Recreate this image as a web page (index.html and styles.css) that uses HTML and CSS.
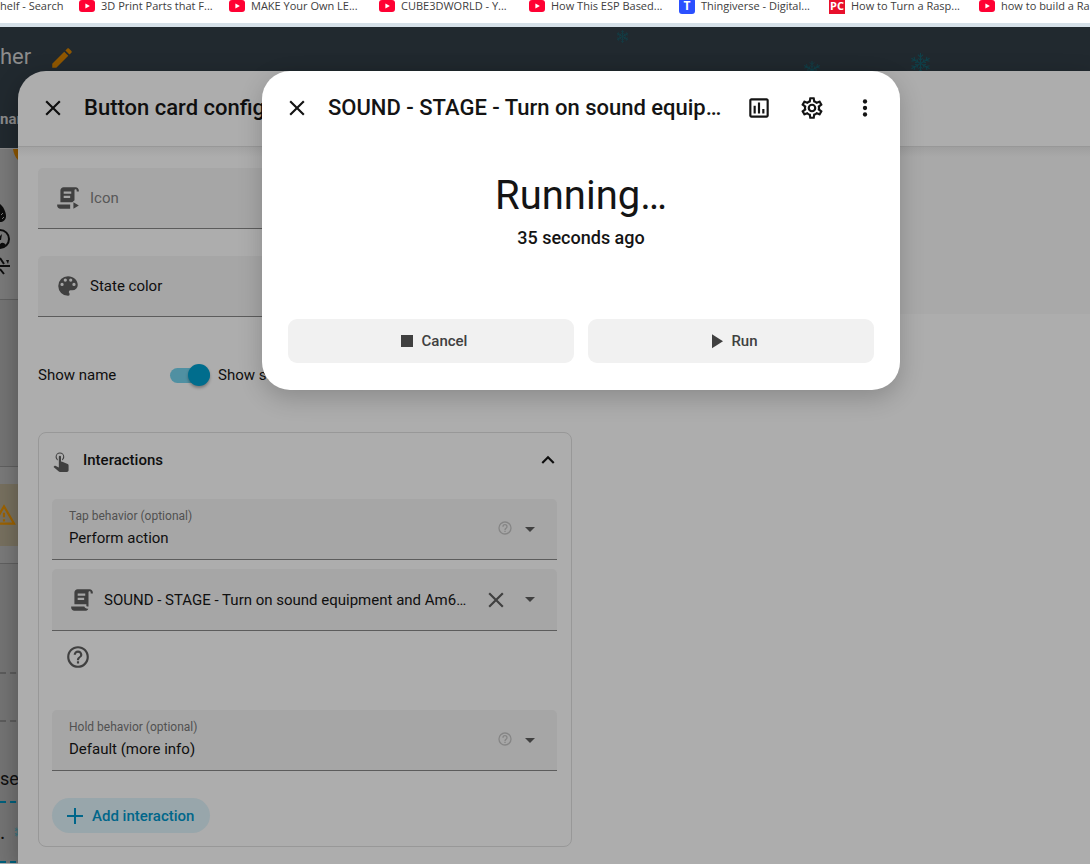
FILE: index.html
```html
<!DOCTYPE html>
<html lang="en">
  <head>
    <meta charset="UTF-8" />
    <meta name="viewport" content="width=device-width, initial-scale=1.0" />
    <title>Button card configuration</title>
    <link rel="stylesheet" href="styles.css">
  </head>
  <body>
    <!-- shared icons -->
    <svg class="sprite" aria-hidden="true">
      <symbol id="close" viewBox="0 0 24 24"><path d="M19,6.41L17.59,5L12,10.59L6.41,5L5,6.41L10.59,12L5,17.59L6.41,19L12,13.41L17.59,19L19,17.59L13.41,12L19,6.41Z" /></symbol>
      <symbol id="help" viewBox="0 0 24 24"><path d="M11,18H13V16H11V18M12,2A10,10 0 0,0 2,12A10,10 0 0,0 12,22A10,10 0 0,0 22,12A10,10 0 0,0 12,2M12,20C7.59,20 4,16.41 4,12C4,7.59 7.59,4 12,4C16.41,4 20,7.59 20,12C20,16.41 16.41,20 12,20M12,6A4,4 0 0,0 8,10H10A2,2 0 0,1 12,8A2,2 0 0,1 14,10C14,12 11,11.75 11,15H13C13,12.75 16,12.5 16,10A4,4 0 0,0 12,6Z" /></symbol>
      <symbol id="caret" viewBox="0 0 10 5"><path d="M0,0H10L5,5Z" /></symbol>
      <symbol id="youtube" viewBox="0 0 16 16"><rect y="2" width="16" height="12" rx="3" fill="#ff0033" /><path d="M6.4,5.4V10.6L10.9,8Z" fill="#fff" /></symbol>
      <symbol id="snow" viewBox="0 0 20 20">
        <g fill="none" stroke="currentColor" stroke-width="1">
          <path id="arm" d="M10,10V0M7.5,1.5L10,4L12.5,1.5M8,5L10,7L12,5" />
          <use href="#arm" transform="rotate(60 10 10)" />
          <use href="#arm" transform="rotate(120 10 10)" />
          <use href="#arm" transform="rotate(180 10 10)" />
          <use href="#arm" transform="rotate(240 10 10)" />
          <use href="#arm" transform="rotate(300 10 10)" />
        </g>
      </symbol>
    </svg>

    <nav class="bookmarks">
      <a class="bookmark bookmark-first" href="#">helf - Search</a>
      <a class="bookmark" href="#"><svg><use href="#youtube" /></svg>3D Print Parts that F...</a>
      <a class="bookmark" href="#"><svg><use href="#youtube" /></svg>MAKE Your Own LE...</a>
      <a class="bookmark" href="#"><svg><use href="#youtube" /></svg>CUBE3DWORLD - Y...</a>
      <a class="bookmark" href="#"><svg><use href="#youtube" /></svg>How This ESP Based...</a>
      <a class="bookmark" href="#"><span class="favicon favicon-t">T</span>Thingiverse - Digital...</a>
      <a class="bookmark" href="#"><span class="favicon favicon-pc">PC</span>How to Turn a Rasp...</a>
      <a class="bookmark" href="#"><svg><use href="#youtube" /></svg>how to build a Ra...</a>
    </nav>

    <div class="app">
      <header class="app-header">
        <div class="app-title">
          <span>her</span>
          <svg class="icon pencil" viewBox="0 0 24 24"><path d="M20.71,7.04C21.1,6.65 21.1,6 20.71,5.63L18.37,3.29C18,2.9 17.35,2.9 16.96,3.29L15.12,5.12L18.87,8.87M3,17.25V21H6.75L17.81,9.93L14.06,6.18L3,17.25Z" /></svg>
        </div>
        <div class="app-tab">nar</div>
        <svg class="snow snow-a"><use href="#snow" /></svg>
        <svg class="snow snow-b"><use href="#snow" /></svg>
        <svg class="snow snow-c"><use href="#snow" /></svg>
      </header>

      <main class="dashboard">
        <div class="tile tile-icons">
          <svg class="marker" viewBox="0 0 5 11"><path d="M0,0H5V11Q1,7 0,0Z" /></svg>
          <svg class="glyphs" viewBox="0 0 11 74">
            <path d="M0,2C3,4 6,10 6,14C6,18 3,20 0,20Z" />
            <g fill="none" stroke="#0d0d0d" stroke-width="2">
              <circle cx="0" cy="37" r="9" />
              <path d="M0,56L4,62M0,64H10M0,67L4,72" />
            </g>
            <path d="M0,42Q3,39 6,43L2,46H0ZM0,34L2,32L1,38H0ZM6,58H9L8,62Z" />
            <path d="M1,13L3,11M2,17L4,15" stroke="#777" stroke-width="1" />
          </svg>
        </div>
        <div class="tile tile-gap"></div>
        <div class="tile tile-warning">
          <div class="warning">
            <svg class="icon" viewBox="0 0 24 24"><path d="M12,2L1,21H23M12,6L19.53,19H4.47M11,10V14H13V10M11,16V18H13V16" /></svg>
          </div>
        </div>
        <div class="drop drop-one"></div>
        <div class="drop drop-two"></div>
        <div class="section-name">se</div>
        <div class="section-card">. <svg><use href="#snow" /></svg></div>
      </main>

      <section class="editor" role="dialog" aria-labelledby="editor-title">
        <header class="editor-header">
          <button class="icon-button" aria-label="Close editor"><svg class="icon"><use href="#close" /></svg></button>
          <h2 class="dialog-title" id="editor-title">Button card configuration</h2>
        </header>

        <div class="editor-body">
          <form class="editor-form">
            <div class="field">
              <svg class="icon" viewBox="0 0 24 24"><path d="M5,5C5,3.3 6.3,2 8,2H19C20.7,2 22,3.3 22,5V6H20V5C20,4.4 19.6,4 19,4C18.4,4 18,4.4 18,5V14L16,16H5V5M8,6V8H15V6H8M8,10V12H14V10H8M2,18H14V22H5C3.3,22 2,20.7 2,19V18M17,16V22L22,19L17,16Z" /></svg>
              <input class="field-value" type="text" placeholder="Icon" aria-label="Icon" />
            </div>
            <div class="field">
              <svg class="icon" viewBox="0 0 24 24"><path d="M17.5,12A1.5,1.5 0 0,1 16,10.5A1.5,1.5 0 0,1 17.5,9A1.5,1.5 0 0,1 19,10.5A1.5,1.5 0 0,1 17.5,12M14.5,8A1.5,1.5 0 0,1 13,6.5A1.5,1.5 0 0,1 14.5,5A1.5,1.5 0 0,1 16,6.5A1.5,1.5 0 0,1 14.5,8M9.5,8A1.5,1.5 0 0,1 8,6.5A1.5,1.5 0 0,1 9.5,5A1.5,1.5 0 0,1 11,6.5A1.5,1.5 0 0,1 9.5,8M6.5,12A1.5,1.5 0 0,1 5,10.5A1.5,1.5 0 0,1 6.5,9A1.5,1.5 0 0,1 8,10.5A1.5,1.5 0 0,1 6.5,12M12,3A9,9 0 0,0 3,12A9,9 0 0,0 12,21A1.5,1.5 0 0,0 13.5,19.5C13.5,19.11 13.35,18.76 13.11,18.5C12.88,18.23 12.73,17.88 12.73,17.5A1.5,1.5 0 0,1 14.23,16H16A5,5 0 0,0 21,11C21,6.58 16.97,3 12,3Z" /></svg>
              <select class="field-value" aria-label="State color">
                <option>State color</option>
              </select>
            </div>

            <div class="switches">
              <div class="switch-row">
                <label for="show-name">Show name</label>
                <input class="switch" type="checkbox" id="show-name" checked />
              </div>
              <div class="switch-row">
                <label for="show-state">Show state</label>
                <input class="switch" type="checkbox" id="show-state" />
              </div>
            </div>

            <section class="panel">
              <header class="panel-header">
                <svg class="icon" viewBox="0 0 24 24"><path d="M10,9A1,1 0 0,1 11,8A1,1 0 0,1 12,9V13.47L13.21,13.6L18.15,15.79C18.68,16.03 19,16.56 19,17.14V21.5C18.97,22.32 18.32,22.97 17.5,23H11C10.62,23 10.26,22.85 10,22.57L5.1,18.37L5.84,17.6C6.03,17.39 6.3,17.28 6.58,17.28H6.8L10,19V9M11,5A4,4 0 0,1 15,9C15,10.5 14.2,11.77 13,12.46V11.24C13.61,10.69 14,9.89 14,9A3,3 0 0,0 11,6A3,3 0 0,0 8,9C8,9.89 8.39,10.69 9,11.24V12.46C7.8,11.77 7,10.5 7,9A4,4 0 0,1 11,5Z" /></svg>
                <h3>Interactions</h3>
                <button class="icon-button" type="button" aria-label="Collapse">
                  <svg class="icon" viewBox="0 0 24 24"><path d="M7.41,15.41L12,10.83L16.59,15.41L18,14L12,8L6,14L7.41,15.41Z" /></svg>
                </button>
              </header>

              <div class="field">
                <div class="field-text">
                  <label for="tap">Tap behavior (optional)</label>
                  <select class="field-value" id="tap">
                    <option>Perform action</option>
                  </select>
                </div>
                <svg class="hint"><use href="#help" /></svg>
                <svg class="caret"><use href="#caret" /></svg>
              </div>

              <div class="field field-action">
                <svg class="icon" viewBox="0 0 24 24"><path d="M17.8,20C17.4,21.2 16.3,22 15,22H5C3.3,22 2,20.7 2,19V18H5L14.2,18C14.6,19.2 15.7,20 17,20H17.8M19,2C20.7,2 22,3.3 22,5V6H20V5C20,4.4 19.6,4 19,4C18.4,4 18,4.4 18,5V18H17C16.4,18 16,17.6 16,17V16H5V5C5,3.3 6.3,2 8,2H19M8,6V8H15V6H8M8,10V12H14V10H8Z" /></svg>
                <input class="field-value" type="text" aria-label="Action" value="SOUND - STAGE - Turn on sound equipment and Am6…" />
                <button class="icon-button" type="button" aria-label="Clear"><svg class="icon"><use href="#close" /></svg></button>
                <svg class="caret"><use href="#caret" /></svg>
              </div>

              <button class="icon-button help-button" type="button" aria-label="Help"><svg class="icon"><use href="#help" /></svg></button>

              <div class="field">
                <div class="field-text">
                  <label for="hold">Hold behavior (optional)</label>
                  <select class="field-value" id="hold">
                    <option>Default (more info)</option>
                  </select>
                </div>
                <svg class="hint"><use href="#help" /></svg>
                <svg class="caret"><use href="#caret" /></svg>
              </div>

              <button class="add-button" type="button">
                <svg viewBox="0 0 16 16"><path d="M7,0H9V7H16V9H9V16H7V9H0V7H7Z" /></svg>
                Add interaction
              </button>
            </section>
          </form>
          <div class="preview"></div>
        </div>
      </section>

      <section class="more-info" role="dialog" aria-labelledby="info-title">
        <header class="more-info-header">
          <button class="icon-button" aria-label="Close"><svg class="icon"><use href="#close" /></svg></button>
          <h2 class="dialog-title" id="info-title">SOUND - STAGE - Turn on sound equip…</h2>
          <div class="more-info-actions">
            <button class="icon-button" aria-label="History">
              <svg class="icon" viewBox="0 0 24 24"><path d="M9 17H7V10H9V17M13 17H11V7H13V17M17 17H15V13H17V17M19 19H5V5H19V19.1M19 3H5C3.9 3 3 3.9 3 5V19C3 20.1 3.9 21 5 21H19C20.1 21 21 20.1 21 19V5C21 3.9 20.1 3 19 3Z" /></svg>
            </button>
            <button class="icon-button" aria-label="Settings">
              <svg class="icon" viewBox="0 0 24 24"><path d="M12,8A4,4 0 0,1 16,12A4,4 0 0,1 12,16A4,4 0 0,1 8,12A4,4 0 0,1 12,8M12,10A2,2 0 0,0 10,12A2,2 0 0,0 12,14A2,2 0 0,0 14,12A2,2 0 0,0 12,10M10,22C9.75,22 9.54,21.82 9.5,21.58L9.13,18.93C8.5,18.68 7.96,18.34 7.44,17.94L4.95,18.95C4.73,19.03 4.46,18.95 4.34,18.73L2.34,15.27C2.21,15.05 2.27,14.78 2.46,14.63L4.57,12.97L4.5,12L4.57,11L2.46,9.37C2.27,9.22 2.21,8.95 2.34,8.73L4.34,5.27C4.46,5.05 4.73,4.96 4.95,5.05L7.44,6.05C7.96,5.66 8.5,5.32 9.13,5.07L9.5,2.42C9.54,2.18 9.75,2 10,2H14C14.25,2 14.46,2.18 14.5,2.42L14.87,5.07C15.5,5.32 16.04,5.66 16.56,6.05L19.05,5.05C19.27,4.96 19.54,5.05 19.66,5.27L21.66,8.73C21.79,8.95 21.73,9.22 21.54,9.37L19.43,11L19.5,12L19.43,13L21.54,14.63C21.73,14.78 21.79,15.05 21.66,15.27L19.66,18.73C19.54,18.95 19.27,19.04 19.05,18.95L16.56,17.95C16.04,18.34 15.5,18.68 14.87,18.93L14.5,21.58C14.46,21.82 14.25,22 14,22H10M11.25,4L10.88,6.61C9.68,6.86 8.62,7.5 7.85,8.39L5.44,7.35L4.69,8.65L6.8,10.2C6.4,11.37 6.4,12.64 6.8,13.8L4.68,15.36L5.43,16.66L7.86,15.62C8.63,16.5 9.68,17.14 10.87,17.38L11.24,20H12.76L13.13,17.39C14.32,17.14 15.37,16.5 16.14,15.62L18.57,16.66L19.32,15.36L17.2,13.81C17.6,12.64 17.6,11.37 17.2,10.2L19.31,8.65L18.56,7.35L16.15,8.39C15.38,7.5 14.32,6.86 13.12,6.62L12.75,4H11.25Z" /></svg>
            </button>
            <button class="icon-button" aria-label="Menu">
              <svg class="icon" viewBox="0 0 24 24"><circle cx="12" cy="6" r="2" /><circle cx="12" cy="12" r="2" /><circle cx="12" cy="18" r="2" /></svg>
            </button>
          </div>
        </header>
        <div class="state">
          <p class="state-value">Running…</p>
          <p class="state-time">35 seconds ago</p>
        </div>
        <div class="run-buttons">
          <button class="run-button"><svg viewBox="0 0 24 24"><path d="M18,18H6V6H18V18Z" /></svg>Cancel</button>
          <button class="run-button"><svg viewBox="0 0 24 24"><path d="M8,5.14V19.14L19,12.14L8,5.14Z" /></svg>Run</button>
        </div>
      </section>
    </div>
  </body>
</html>
```

FILE: styles.css
```css
* {
  box-sizing: border-box;
}
body {
  margin: 0;
  height: 100vh;
  display: flex;
  flex-direction: column;
  overflow: hidden;
  font-family: Roboto, sans-serif;
  font-size: 15px;
  color: #0f0f0f;
  background-color: #adadad;
}
h2,
h3,
p {
  margin: 0;
}
button,
input,
select {
  margin: 0;
  padding: 0;
  border: 0;
  background: none;
  font: inherit;
  color: inherit;
}
svg {
  display: block;
  flex: none;
  fill: currentColor;
}
.sprite {
  position: absolute;
  width: 0;
  height: 0;
}
.icon {
  width: 26px;
  height: 26px;
}
.icon-button {
  flex: none;
  cursor: pointer;
}

/* bookmarks bar */
.bookmarks {
  flex: none;
  display: flex;
  height: 27px;
  overflow: hidden;
  background-color: #fff;
  border-bottom: 4px solid #d5e0e8;
  font-family: "Open Sans", sans-serif;
  font-size: 11px;
  line-height: 12px;
}
.bookmark {
  flex: none;
  display: flex;
  align-items: center;
  gap: 6px;
  width: 150px;
  height: 12px;
  color: #404040;
  text-decoration: none;
  white-space: nowrap;
}
.bookmark-first {
  width: 79px;
}
.bookmark svg,
.favicon {
  flex: none;
  width: 16px;
  height: 16px;
}
.favicon {
  color: #fff;
  font-size: 12px;
  font-weight: bold;
  line-height: 16px;
  text-align: center;
}
.favicon-t {
  background-color: #2b50ff;
  border-radius: 3px;
}
.favicon-pc {
  background-color: #e8102c;
  font-size: 11px;
}

/* dashboard behind the dialogs */
.app {
  position: relative;
  flex: 1;
  min-height: 0;
  overflow: hidden;
}
.app-header {
  position: relative;
  height: 122px;
  background-color: #21292f;
  border-bottom: 1px solid #8a8a8a;
  color: #8c8c8c;
}
.app-title {
  display: flex;
  align-items: center;
  gap: 18px;
  height: 58px;
  font-size: 22px;
}
.pencil {
  margin-top: 4px;
  color: #8f5700;
}
.app-tab {
  padding-top: 24px;
  font-weight: bold;
  line-height: 20px;
}
.snow {
  position: absolute;
  color: #10414a;
}
.snow-a {
  left: 616px;
  top: 3px;
  width: 13px;
  height: 13px;
}
.snow-b {
  left: 803px;
  top: 34px;
  width: 18px;
  height: 18px;
}
.snow-c {
  left: 910px;
  top: 26px;
  width: 21px;
  height: 21px;
}
.dashboard {
  display: flex;
  flex-direction: column;
  width: 100%;
  background-color: #747474;
}
.tile {
  border-bottom: 1px solid #606060;
}
.tile-icons {
  height: 151px;
  background-color: #7a7a7a;
}
.marker {
  width: 5px;
  height: 11px;
  margin-left: 13px;
  color: #8f5700;
}
.glyphs {
  width: 11px;
  height: 74px;
  margin-top: 42px;
  color: #0d0d0d;
}
.tile-gap {
  height: 167px;
}
.tile-warning {
  height: 97px;
  padding-top: 17px;
  background-color: #7a7a7a;
}
.warning {
  display: flex;
  align-items: center;
  height: 62px;
  background-color: #77705f;
  color: #9c6200;
}
.warning .icon {
  margin-left: -9px;
}
.drop {
  border-bottom: 2px dashed #5c5c5c;
}
.drop-one {
  height: 110px;
}
.drop-two {
  height: 48px;
}
.section-name {
  height: 79px;
  padding-top: 46px;
  font-size: 18px;
  line-height: 22px;
}
.section-card {
  display: flex;
  align-items: center;
  gap: 9px;
  height: 62px;
  border: dashed #00607c;
  border-width: 2px 0;
  font-size: 20px;
}
.section-card svg {
  width: 14px;
  height: 14px;
  color: #2f7482;
}

/* card editor */
.editor {
  position: absolute;
  top: 44px;
  right: 0;
  bottom: 0;
  left: 18px;
  background-color: #adadad;
  border-top-left-radius: 28px;
  box-shadow: 0 8px 24px rgba(0, 0, 0, 0.3);
}
.dialog-title {
  font-size: 22px;
  font-weight: 500;
  line-height: 28px;
  white-space: nowrap;
}
.editor-header {
  display: flex;
  align-items: center;
  gap: 18px;
  height: 76px;
  padding: 0 22px 2px;
  border-bottom: 1px solid #989898;
}
.editor-body {
  display: grid;
  grid-template-columns: minmax(0, 574px) 1fr;
  align-items: start;
  background: linear-gradient(#a3a3a3, #adadad 10px);
}
.editor-form {
  padding: 21px 20px;
}
.preview {
  height: 167px;
  background-color: rgba(0, 0, 0, 0.02);
}
.field {
  display: flex;
  align-items: center;
  gap: 9px;
  height: 61px;
  padding: 0 22px 0 17px;
  background-color: #a6a6a6;
  border-bottom: 1px solid #5c5c5c;
  border-radius: 5px 5px 0 0;
}
.field .icon {
  color: #404040;
}
.field-value {
  flex: 1;
  min-width: 0;
  appearance: none;
  outline: none;
  line-height: 20px;
  text-overflow: ellipsis;
}
.field-value::placeholder {
  color: #585858;
  opacity: 1;
}
.editor-form > .field {
  margin-bottom: 27px;
}
.switches {
  display: flex;
  gap: 8px;
  height: 62px;
  align-items: center;
  margin-bottom: 26px;
}
.switch-row {
  display: flex;
  align-items: center;
  justify-content: space-between;
  width: 172px;
}
.switch {
  position: relative;
  appearance: none;
  width: 40px;
  height: 15px;
  border-radius: 8px;
  background-color: #858585;
}
.switch::before {
  content: "";
  position: absolute;
  top: -4px;
  left: 0;
  width: 22px;
  height: 22px;
  border-radius: 50%;
  background-color: #adadad;
  box-shadow: 0 2px 3px rgba(0, 0, 0, 0.3);
}
.switch:checked {
  background-color: #5090a2;
}
.switch:checked::before {
  left: auto;
  right: 0;
  background-color: #006d8d;
}
.panel {
  padding: 0 14px 13px 13px;
  border: 1px solid #989898;
  border-radius: 8px;
}
.panel-header {
  display: flex;
  align-items: center;
  gap: 9px;
  height: 66px;
  padding: 0 0 12px;
}
.panel-header > .icon {
  margin-left: -4px;
  color: #404040;
}
.panel-header .icon-button {
  margin-right: -4px;
}
h3 {
  flex: 1;
  font-size: 15px;
  font-weight: 500;
}
.field-text {
  flex: 1;
  min-width: 0;
  display: flex;
  flex-direction: column;
  padding-bottom: 2px;
}
.field-text label {
  font-size: 12px;
  line-height: 20px;
  color: #515151;
}
.field-text .field-value {
  flex: none;
  height: 24px;
}
.hint {
  width: 16px;
  height: 16px;
  margin: 0 3px 3px 0;
  color: #858585;
}
.caret {
  width: 10px;
  height: 5px;
  color: #404040;
}
.field-action {
  height: 62px;
  margin-top: 9px;
}
.field-action .icon-button {
  margin-right: 7px;
}
.help-button {
  display: block;
  margin: 13px 0 40px 13px;
  color: #404040;
}
.add-button {
  display: flex;
  align-items: center;
  gap: 9px;
  height: 35px;
  margin-top: 27px;
  padding: 0 16px 0 15px;
  border-radius: 18px;
  background-color: #98a6ab;
  color: #00668a;
  font-weight: 500;
  cursor: pointer;
}
.add-button svg {
  width: 16px;
  height: 16px;
}

/* more info dialog */
.more-info {
  position: absolute;
  top: 44px;
  left: 262px;
  width: 638px;
  max-width: calc(100% - 262px);
  padding-bottom: 27px;
  background-color: #fff;
  border-radius: 28px;
  box-shadow: 0 8px 24px rgba(0, 0, 0, 0.2);
  color: #141414;
}
.more-info-header {
  display: flex;
  align-items: center;
  gap: 18px;
  height: 74px;
  padding: 0 22px;
}
.more-info-header .dialog-title {
  flex: 1;
  min-width: 0;
  overflow: hidden;
  text-overflow: ellipsis;
}
.more-info-actions {
  display: flex;
  gap: 27px;
}
.state {
  padding: 27px 0 68px;
  text-align: center;
}
.state-value {
  font-size: 40px;
  line-height: 48px;
}
.state-time {
  padding-top: 5px;
  font-size: 18px;
  font-weight: 500;
  line-height: 26px;
}
.run-buttons {
  display: grid;
  grid-template-columns: 1fr 1fr;
  gap: 14px;
  padding: 0 26px;
}
.run-button {
  display: flex;
  align-items: center;
  justify-content: center;
  gap: 3px;
  height: 44px;
  border-radius: 9px;
  background-color: #f1f1f1;
  color: #404040;
  font-weight: 500;
  cursor: pointer;
}
.run-button svg {
  width: 24px;
  height: 24px;
}
```
